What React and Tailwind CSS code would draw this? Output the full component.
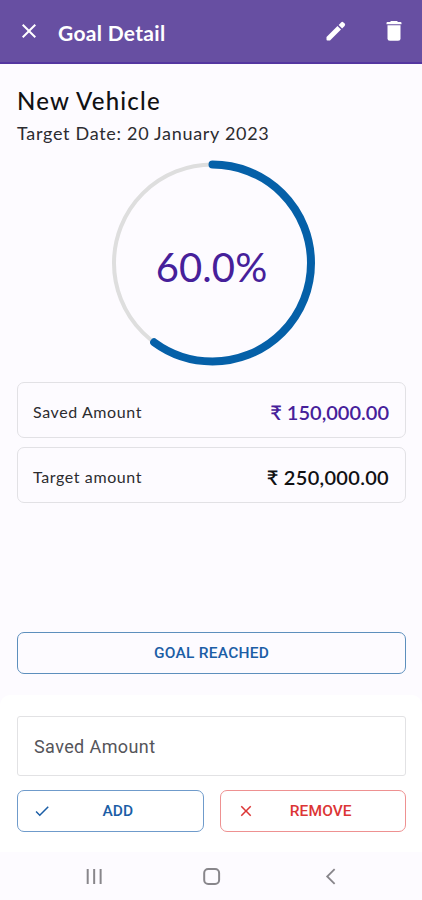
import { MdClose, MdCheck } from 'react-icons/md';

const goal = {
  name: 'New Vehicle',
  targetDate: '20 January 2023',
  saved: 150000,
  target: 250000,
};

const formatAmount = (value) =>
  value.toLocaleString('en-US', { minimumFractionDigits: 2 });

function ProgressRing({ percent }) {
  const radius = 98.5;
  const length = 2 * Math.PI * radius;

  return (
    <div className="mx-auto mt-[14px] grid h-[210px] w-[210px] place-items-center">
      <svg viewBox="0 0 210 210" className="col-start-1 row-start-1 h-[210px] w-[210px]" fill="none">
        <circle cx="105.5" cy="105" r={radius} stroke="#dedede" strokeWidth="4" />
        <circle
          cx="105.5"
          cy="105"
          r={radius}
          stroke="#0560a8"
          strokeWidth="8"
          strokeLinecap="round"
          strokeDasharray={`${(length * percent) / 100} ${length}`}
          transform="rotate(-90 105.5 105)"
        />
      </svg>
      <span className="col-start-1 row-start-1 pt-[7px] text-[40px] leading-none tracking-[0.1px] text-[#46209a]">
        {percent.toFixed(1)}%
      </span>
    </div>
  );
}

function AmountRow({ label, children }) {
  return (
    <div className="flex h-14 items-center justify-between rounded-[7px] border border-[#e2e1e5] pl-[15px] pr-4 pt-[3px]">
      <span className="text-[16px] tracking-[0.6px] text-[#2c2c30]">{label}</span>
      {children}
    </div>
  );
}

export default function App() {
  const percent = (goal.saved / goal.target) * 100;

  return (
    <div className="flex h-[900px] w-[422px] flex-col overflow-hidden bg-[#fdfbff] font-['Lato','Noto_Sans',sans-serif] text-[#111113]">
      {/* Header */}
      <header className="flex h-16 shrink-0 items-center border-b-2 border-[#5436a0] bg-[#674fa2] pl-[17px] pr-5 text-white">
        <MdClose className="h-6 w-6" />
        <h1 className="ml-[17px] mt-[3px] text-[21px] font-bold leading-none tracking-[0.3px]">Goal Detail</h1>
        <svg viewBox="0 0 20 20" className="ml-auto h-5 w-5" fill="currentColor">
          <path d="M.5 16v2.6a.9.9 0 0 0 .9.9H4L15 8.5 11.5 5z" />
          <path d="M12.6 3.9l2.5-2.5a1.7 1.7 0 0 1 2.4 0l1.1 1.1a1.7 1.7 0 0 1 0 2.4l-2.5 2.5z" />
        </svg>
        <svg viewBox="0 0 16 20" className="ml-[40px] h-5 w-4" fill="currentColor">
          <path d="M5 0h6l1 1h2.5a1 1 0 0 1 1 1v1.2H.5V2a1 1 0 0 1 1-1H4z" />
          <path d="M1.5 4.2h13v13a2.5 2.5 0 0 1-2.5 2.5H4a2.5 2.5 0 0 1-2.5-2.5z" />
        </svg>
      </header>

      <main className="flex flex-1 flex-col pl-[17px] pr-4 pt-[23px]">
        <h2 className="text-[24px] font-medium leading-[28px] tracking-[1.2px]">{goal.name}</h2>
        <p className="mt-[7px] text-[18px] leading-[22px] tracking-[0.7px] text-[#2c2c30]">
          Target Date: {goal.targetDate}
        </p>

        <ProgressRing percent={percent} />

        <div className="mt-[14px] flex flex-col gap-[9px]">
          <AmountRow label="Saved Amount">
            <span className="text-[20px] font-semibold text-[#46209a]">₹ {formatAmount(goal.saved)}</span>
          </AmountRow>
          <AmountRow label="Target amount">
            <span className="text-[20px] font-semibold tracking-[0.3px]">₹ {formatAmount(goal.target)}</span>
          </AmountRow>
        </div>

        <button className="mb-[21px] mt-auto h-[42px] rounded-[7px] border border-[#5d8fbd] pt-0.5 font-['Roboto',sans-serif] text-[15.5px] font-medium tracking-[0.25px] text-[#1b5ea6]">
          GOAL REACHED
        </button>
      </main>

      {/* Bottom sheet */}
      <section className="h-[157px] shrink-0 rounded-t-[10px] bg-white pl-[17px] pr-4 pt-[21px] font-['Roboto',sans-serif]">
        <div className="flex h-[60px] items-center rounded-[3px] border border-[#e2e2e4] px-4 text-[18px] tracking-[0.4px] text-[#55555a]">
          Saved Amount
        </div>
        <div className="mt-[14px] grid grid-cols-2 gap-4">
          <button className="flex h-[42px] items-center rounded-[7px] border border-[#6f9bcb] pl-[15px] pr-[18px] text-[15.5px] font-medium text-[#1b5ea6]">
            <MdCheck className="h-[18px] w-[18px]" />
            <span className="flex-1 pt-0.5 text-center">ADD</span>
          </button>
          <button className="flex h-[42px] items-center rounded-[7px] border border-[#ee9191] pl-4 pr-[18px] text-[15.5px] font-medium text-[#dc3535]">
            <MdClose className="h-[18px] w-[18px]" />
            <span className="flex-1 pt-0.5 text-center tracking-[0.1px]">REMOVE</span>
          </button>
        </div>
      </section>

      {/* Android navigation */}
      <nav className="grid h-12 shrink-0 grid-cols-3 px-[35px] text-[#88868b]">
        <svg viewBox="0 0 118 48" className="h-12 w-full" fill="none" stroke="currentColor" strokeWidth="2">
          <path d="M53 17v15M59.5 17v15M66 17v15" />
        </svg>
        <svg viewBox="0 0 118 48" className="h-12 w-full" fill="none" stroke="currentColor" strokeWidth="2">
          <rect x="52.5" y="17" width="15" height="15" rx="4" />
        </svg>
        <svg viewBox="0 0 118 48" className="h-12 w-full" fill="none" stroke="currentColor" strokeWidth="1.8">
          <path d="M65 17l-7.5 7.5L65 32" />
        </svg>
      </nav>
    </div>
  );
}
